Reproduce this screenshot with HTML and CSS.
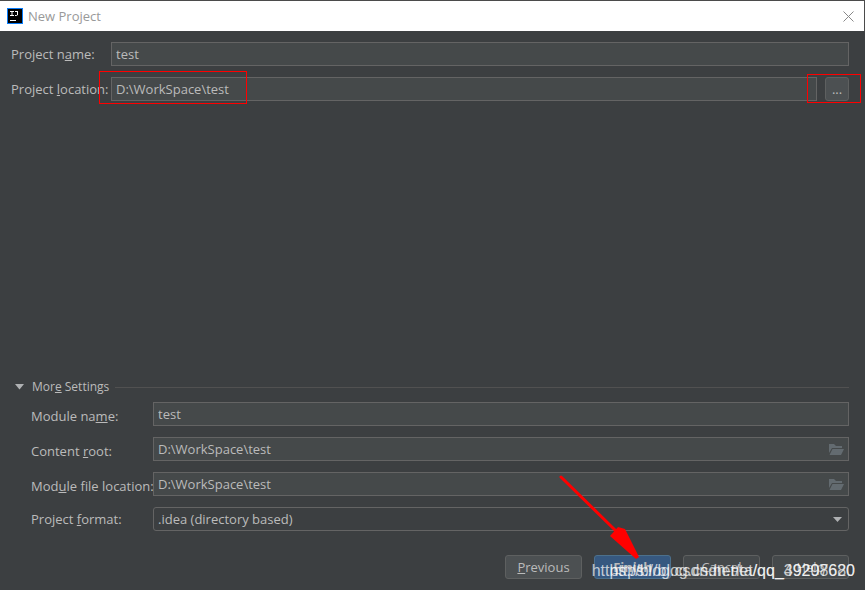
FILE: index.html
```html
<!DOCTYPE html>
<html lang="en">
<head>
    <meta charset="utf-8">
    <title>New Project</title>
    <link rel="stylesheet" href="styles.css">
</head>
<body>
    <header class="titlebar">
        <svg class="logo" width="16" height="16" viewBox="0 0 16 16">
            <rect x="0.5" y="0.5" width="15" height="15" fill="#000" stroke="#087cfa"/>
            <path d="M3 3.500h4M5 3v5M3 7.500h4M8 3.500h3M10.500 3v4L9.500 7.500H8M3 12.500h6" fill="none" stroke="#fff"/>
        </svg>
        <h1>New Project</h1>
        <button class="close" aria-label="Close">
            <svg width="11" height="11" viewBox="0 0 11 11"><path d="M0.500 0.500l10 10M10.500 0.500l-10 10" stroke="#888"/></svg>
        </button>
    </header>

    <form class="dialog">
        <div class="project">
            <label for="name">Project n<u>a</u>me:</label>
            <input type="text" id="name" value="test">
            <label for="location">Project <u>l</u>ocation:</label>
            <div class="location">
                <input type="text" id="location" value="D:\WorkSpace\test">
                <button type="button" class="browse">...</button>
                <span class="mark mark-path"></span>
                <span class="mark mark-browse"></span>
            </div>
        </div>

        <div class="more">
            <h2><svg width="10" height="6" viewBox="0 0 10 6"><path d="M0 0h9L4.500 5.500z" fill="#afb1b3"/></svg><span>Mor<u>e</u> Settings</span></h2>
            <div class="settings">
                <label for="module">Module na<u>m</u>e:</label>
                <input type="text" id="module" value="test">
                <label for="root">Content <u>r</u>oot:</label>
                <div class="file">
                    <input type="text" id="root" value="D:\WorkSpace\test">
                    <svg class="folder" width="16" height="12" viewBox="0 0 16 12"><path d="M0 0h5l2 2h6v2H3L0 9zM3.500 5H15l-3 6H0.500z" fill="#636b70"/></svg>
                </div>
                <label for="file">Mod<u>u</u>le file location:</label>
                <div class="file">
                    <input type="text" id="file" value="D:\WorkSpace\test">
                    <svg class="folder" width="16" height="12" viewBox="0 0 16 12"><path d="M0 0h5l2 2h6v2H3L0 9zM3.500 5H15l-3 6H0.500z" fill="#636b70"/></svg>
                </div>
                <label class="format" for="format">Project <u>f</u>ormat:</label>
                <div class="file">
                    <select id="format"><option>.idea (directory based)</option></select>
                    <svg class="arrow" width="10" height="6" viewBox="0 0 10 6"><path d="M0 0h9L4.500 5z" fill="#afb1b3"/></svg>
                </div>
            </div>
        </div>

        <div class="buttons">
            <button type="button"><u>P</u>revious</button>
            <button type="button" class="default"><u>F</u>inish</button>
            <button type="button" class="covered">Cancel</button>
            <button type="button" class="covered">Help</button>
            <span class="watermark">https://blog.csdn.net/ta/qq_49298680</span>
            <span class="watermark">https://blog.csdn.net/qq_39207620</span>
            <svg class="pointer" width="82" height="86" viewBox="0 0 82 86"><path d="M2 4l54 53" stroke="#f00" stroke-width="3" stroke-linecap="round"/><path d="M51 63l8-9 7 2 14 28-3 2z" fill="#f00"/></svg>
        </div>
    </form>
</body>
</html>
```
FILE: styles.css
```css
* {
    box-sizing: border-box;
}
body {
    margin: 0;
    min-height: 100vh;
    display: flex;
    flex-direction: column;
    background-color: #3c3f41;
    color: #bbb;
    font: 13px/20px "Open Sans", sans-serif;
}
h1, h2 {
    margin: 0;
    font-size: 13px;
    font-weight: normal;
}
.titlebar {
    display: flex;
    align-items: center;
    gap: 5px;
    height: 31px;
    padding: 0 10px 0 7px;
    border-top: 1px solid #4b4b4b;
    border-right: 1px solid #4b4b4b;
    background-color: white;
    color: #999;
}
.dialog {
    flex: 1;
    display: flex;
    flex-direction: column;
    padding: 11px 16px 11px 11px;
}
.project, .settings {
    display: grid;
    grid-template-columns: 100px 1fr;
    row-gap: 11px;
    align-items: center;
}
input, select {
    display: block;
    width: 100%;
    height: 24px;
    padding: 0 4px;
    border: 1px solid #646464;
    border-radius: 0;
    background-color: #45494a;
    color: #bbb;
    font: inherit;
}
label {
    white-space: nowrap;
}
.location {
    position: relative;
    display: flex;
    gap: 8px;
}
button {
    height: 24px;
    border: 1px solid #5e6060;
    border-radius: 3px;
    background-color: #4c5052;
    color: #bbb;
    font: inherit;
    line-height: 20px;
}
.close {
    display: flex;
    align-items: center;
    margin-left: auto;
    padding: 0;
    border: none;
    background: none;
}
.browse {
    flex: none;
    width: 24px;
    padding: 0;
}
.mark {
    position: absolute;
    border: 1px solid red;
    pointer-events: none;
}
.mark-path {
    left: -12px;
    top: -6px;
    width: 148px;
    height: 33px;
}
.mark-browse {
    right: -12px;
    top: -3px;
    width: 54px;
    height: 29px;
}
.more {
    margin-top: auto;
}
h2 {
    display: flex;
    align-items: center;
    padding-left: 4px;
    font-size: 12px;
}
h2 span {
    margin-left: 7px;
}
h2::after {
    content: "";
    flex: 1;
    margin-left: 6px;
    border-top: 1px solid #515151;
}
.settings {
    grid-template-columns: 122px 1fr;
    margin-top: 5px;
    padding-left: 20px;
}
.settings label {
    padding-top: 4px;
}
.settings .format {
    padding-top: 0;
}
.file {
    position: relative;
}
.folder, .arrow {
    position: absolute;
    right: 4px;
    top: 7px;
}
.arrow {
    right: 6px;
    top: 10px;
}
select {
    appearance: none;
    border-radius: 3px;
    background-color: #3c3f41;
}
.buttons {
    position: relative;
    display: flex;
    justify-content: flex-end;
    gap: 12px;
    margin-top: 24px;
}
.buttons button {
    width: 77px;
    padding: 0;
}
.buttons .default {
    border-color: #4c708c;
    background-color: #365880;
    font-weight: bold;
}
.buttons .covered {
    background-color: #45494b;
}
.watermark {
    position: absolute;
    right: -6px;
    top: 6px;
    color: rgba(255, 255, 255, 0.7);
    font: 16px/20px "Liberation Sans", sans-serif;
}
.pointer {
    position: absolute;
    right: 208px;
    bottom: 20px;
}
```
